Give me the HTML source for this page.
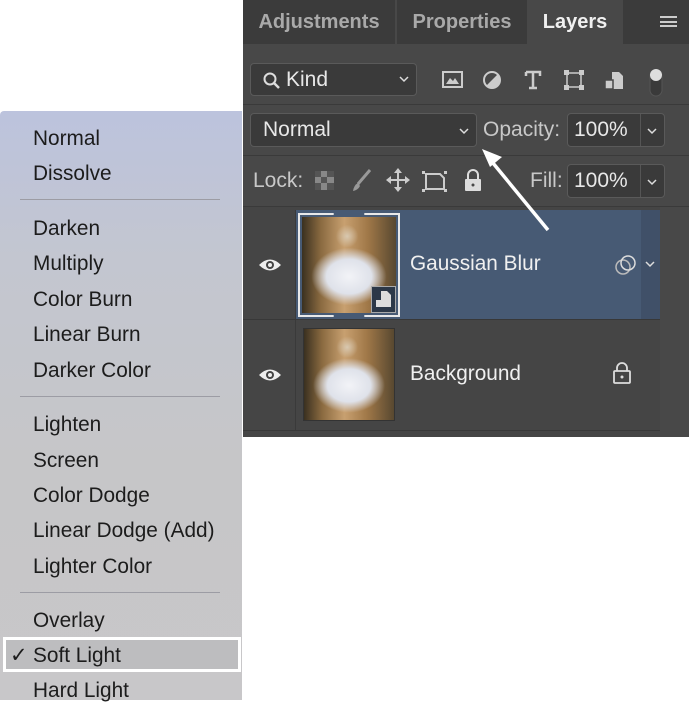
<!DOCTYPE html>
<html><head><style>
*{margin:0;padding:0;box-sizing:border-box}
body{width:689px;height:700px;background:#fff;position:relative;overflow:hidden;font-family:"Liberation Sans",sans-serif}
.a{position:absolute}
.panel{left:243px;top:0;width:446px;height:437px;background:#484848}
.tab{top:0;height:44px;background:#3b3b3b;color:#a9a9a9;font-size:20px;font-weight:bold;line-height:44px;text-align:center}
.box{background:#3a3a3a;border:1px solid #5a5a5a;border-radius:4px;color:#e8e8e8;font-size:21px}
.menu{left:0;top:111px;width:242px;height:589px;background:linear-gradient(#bcc3dd 0%,#c3c6d0 25%,#c6c6c8 60%,#c8c7c9 100%);border-top-left-radius:4px}
.mi{position:absolute;left:33px;font-size:20.8px;color:#1c1c1c;line-height:24px}
.sep{position:absolute;left:20px;width:200px;height:1px;background:#9c9ca4}
.thumb{background:
radial-gradient(ellipse 40% 30% at 50% 62%,#f2f3f7 0%,#dfe2ea 60%,rgba(220,220,230,0) 100%),
radial-gradient(ellipse 12% 12% at 48% 20%,#d8c8b0 0%,rgba(0,0,0,0) 100%),
linear-gradient(90deg,#3a3020 0%,#8a6a40 20%,#c8a070 45%,#a07848 70%,#584830 100%);}
</style></head><body>
<div class="a panel"></div>
<div class="a tab" style="left:243px;width:152px">Adjustments</div>
<div class="a tab" style="left:397px;width:130px">Properties</div>
<div class="a tab" style="left:529px;width:92px;background:#484848;color:#f0f0f0">Layers</div>
<div class="a tab" style="left:623px;width:66px"></div>
<div class="a" style="left:660px;top:16px;width:17px;height:11px;border-top:2px solid #ccc;border-bottom:2px solid #ccc"><div style="margin-top:2.5px;height:2px;background:#ccc"></div></div>
<div class="a" style="left:243px;top:104px;width:446px;height:1px;background:#3a3a3a"></div>
<div class="a" style="left:243px;top:155px;width:446px;height:1px;background:#3a3a3a"></div>
<div class="a" style="left:243px;top:206px;width:446px;height:1px;background:#3a3a3a"></div>
<!-- kind -->
<div class="a box" style="left:250px;top:63px;width:167px;height:33px;padding-left:35px;line-height:31px">Kind</div>
<svg class="a" style="left:262px;top:71px" width="20" height="20"><circle cx="8" cy="8" r="5.5" fill="none" stroke="#ddd" stroke-width="2"/><path d="M12 12l5 5" stroke="#ddd" stroke-width="2.5"/></svg>
<svg class="a" style="left:398px;top:74px" width="12" height="10"><path d="M2 3l4 4 4-4" fill="none" stroke="#ddd" stroke-width="1.5"/></svg>
<svg class="a" style="left:440px;top:68px" width="230" height="30">
<rect x="3" y="4" width="19" height="15" fill="none" stroke="#ccc" stroke-width="2"/><path d="M6 16l4-6 3 3 2-3 4 6z" fill="#ccc"/>
<circle cx="52" cy="12" r="8" fill="none" stroke="#ccc" stroke-width="2"/><path d="M46 18L58 6A8 8 0 0 1 46 18z" fill="#ccc"/>
<path d="M86 4h14v4M93 4v16M89 20h8M86 4v4" fill="none" stroke="#ccc" stroke-width="2.5"/>
<rect x="127" y="5" width="14" height="14" fill="none" stroke="#ccc" stroke-width="1.5"/><g fill="#ccc"><rect x="124" y="2" width="5" height="5"/><rect x="139" y="2" width="5" height="5"/><rect x="124" y="17" width="5" height="5"/><rect x="139" y="17" width="5" height="5"/></g>
<path d="M172 4h7l4 4v13h-11z" fill="#ccc"/><rect x="165" y="12" width="8" height="9" fill="#ccc" stroke="#484848" stroke-width="1.5"/>
<rect x="210" y="2" width="12" height="26" rx="6" fill="#3a3a3a" stroke="#555"/><circle cx="216" cy="7" r="6" fill="#ddd"/>
</svg>
<!-- normal -->
<div class="a box" style="left:250px;top:113px;width:227px;height:34px;padding-left:12px;line-height:32px">Normal</div>
<svg class="a" style="left:458px;top:126px" width="12" height="10"><path d="M2 3l4 4 4-4" fill="none" stroke="#ddd" stroke-width="1.5"/></svg>
<div class="a" style="left:483px;top:118px;color:#c8c8c8;font-size:21px">Opacity:</div>
<div class="a box" style="left:567px;top:113px;width:98px;height:34px;padding-left:6px;line-height:32px">100%</div>
<div class="a" style="left:640px;top:114px;width:1px;height:32px;background:#555"></div>
<svg class="a" style="left:646px;top:126px" width="12" height="10"><path d="M2 3l4 4 4-4" fill="none" stroke="#ddd" stroke-width="1.5"/></svg>
<!-- lock -->
<div class="a" style="left:253px;top:169px;color:#c8c8c8;font-size:21px">Lock:</div>
<svg class="a" style="left:314px;top:168px" width="180" height="26">
<rect x="1" y="3" width="19" height="19" fill="#888"/><g fill="#555"><rect x="1" y="3" width="6" height="6"/><rect x="13" y="3" width="7" height="6"/><rect x="7" y="9" width="6" height="6"/><rect x="1" y="15" width="6" height="7"/><rect x="13" y="15" width="7" height="7"/></g>
<path d="M56 2L44 16" stroke="#999" stroke-width="3"/><path d="M44 15q-4 2-5 8q5-1 7-5z" fill="#999"/>
<path d="M84 2v20M74 12h20" stroke="#ccc" stroke-width="2"/><path d="M84 0l-4 5h8zM84 24l-4-5h8zM72 12l5-4v8zM96 12l-5-4v8z" fill="#ccc"/>
<path d="M112 6h14l4 4v11h-18z" fill="none" stroke="#ccc" stroke-width="2"/><g fill="#ccc"><rect x="108" y="3" width="3" height="3"/><rect x="130" y="3" width="3" height="3"/><rect x="108" y="21" width="3" height="3"/><rect x="130" y="21" width="3" height="3"/></g>
<rect x="151" y="11" width="16" height="12" rx="1" fill="#ddd"/><path d="M154 11V7a5 5 0 0 1 10 0v4" fill="none" stroke="#ddd" stroke-width="2"/><circle cx="159" cy="17" r="1.5" fill="#484848"/>
</svg>
<div class="a" style="left:530px;top:169px;color:#c8c8c8;font-size:21px">Fill:</div>
<div class="a box" style="left:567px;top:164px;width:98px;height:34px;padding-left:6px;line-height:32px">100%</div>
<div class="a" style="left:640px;top:165px;width:1px;height:32px;background:#555"></div>
<svg class="a" style="left:646px;top:177px" width="12" height="10"><path d="M2 3l4 4 4-4" fill="none" stroke="#ddd" stroke-width="1.5"/></svg>
<!-- layers -->
<div class="a" style="left:243px;top:207px;width:446px;height:230px;background:#454545"></div>
<div class="a" style="left:295px;top:210px;width:1px;height:220px;background:#3a3a3a"></div>
<div class="a" style="left:296px;top:210px;width:364px;height:109px;background:#475a74"></div>
<div class="a" style="left:641px;top:210px;width:19px;height:109px;background:#405068"></div>
<div class="a" style="left:243px;top:319px;width:446px;height:1px;background:#383838"></div>
<div class="a" style="left:243px;top:430px;width:446px;height:1px;background:#383838"></div>
<div class="a" style="left:660px;top:207px;width:29px;height:230px;background:#484848"></div>
<svg class="a" style="left:258px;top:256px" width="24" height="140"><path d="M1 9q11-11 22 0q-11 11-22 0z" fill="#eee"/><circle cx="12" cy="9" r="4" fill="#454545"/><circle cx="12" cy="9" r="2" fill="#eee"/><path d="M1 119q11-11 22 0q-11 11-22 0z" fill="#eee"/><circle cx="12" cy="119" r="4" fill="#454545"/><circle cx="12" cy="119" r="2" fill="#eee"/></svg>
<div class="a thumb" style="left:302px;top:217px;width:94px;height:96px"></div>
<div class="a" style="left:298px;top:213px;width:102px;height:104px;border:2px solid #e8e8e8;clip-path:polygon(0 0,35% 0,35% 100%,0 100%,0 0,100% 0,100% 100%,65% 100%,65% 0)"></div>
<div class="a" style="left:371px;top:286px;width:25px;height:27px;background:#2c3848;border:1px solid #aaa"></div>
<svg class="a" style="left:374px;top:289px" width="20" height="20"><path d="M7 2h6l4 4v12h-8v-6h-2z" fill="#ddd"/><rect x="2" y="11" width="7" height="7" fill="#ddd"/></svg>
<div class="a thumb" style="left:303px;top:328px;width:92px;height:93px;border:1px solid #333"></div>
<div class="a" style="left:410px;top:252px;color:#f0f0f0;font-size:20.8px">Gaussian Blur</div>
<div class="a" style="left:410px;top:362px;color:#f0f0f0;font-size:20.8px">Background</div>
<svg class="a" style="left:614px;top:254px" width="24" height="22"><circle cx="9" cy="13" r="7" fill="none" stroke="#bbb" stroke-width="1.5"/><circle cx="14" cy="9" r="7" fill="none" stroke="#ddd" stroke-width="1.5"/></svg>
<svg class="a" style="left:644px;top:259px" width="12" height="10"><path d="M2 3l4 4 4-4" fill="none" stroke="#ddd" stroke-width="1.5"/></svg>
<svg class="a" style="left:612px;top:362px" width="20" height="22"><rect x="2" y="9" width="16" height="12" rx="1" fill="none" stroke="#ddd" stroke-width="1.8"/><path d="M5 9V6a5 5 0 0 1 10 0v3" fill="none" stroke="#ddd" stroke-width="1.8"/><circle cx="10" cy="15" r="1.5" fill="#ddd"/></svg>
<!-- arrow -->
<svg class="a" style="left:470px;top:140px" width="90" height="100"><path d="M78 90L18 17" stroke="#fff" stroke-width="3.5"/><path d="M12 9l20 8-12 10z" fill="#fff"/></svg>
<!-- menu -->
<div class="a menu">
<div class="mi" style="top:16px">Normal</div>
<div class="mi" style="top:51px">Dissolve</div>
<div class="sep" style="top:88px"></div>
<div class="mi" style="top:106px">Darken</div>
<div class="mi" style="top:141px">Multiply</div>
<div class="mi" style="top:177px">Color Burn</div>
<div class="mi" style="top:212px">Linear Burn</div>
<div class="mi" style="top:248px">Darker Color</div>
<div class="sep" style="top:285px"></div>
<div class="mi" style="top:302px">Lighten</div>
<div class="mi" style="top:338px">Screen</div>
<div class="mi" style="top:373px">Color Dodge</div>
<div class="mi" style="top:408px">Linear Dodge (Add)</div>
<div class="mi" style="top:444px">Lighter Color</div>
<div class="sep" style="top:481px"></div>
<div class="mi" style="top:498px">Overlay</div>
<div style="position:absolute;left:3px;top:526px;width:238px;height:35px;border:3px solid #fff;background:#bdbdbf"></div>
<div class="mi" style="top:533px;left:10px">✓</div>
<div class="mi" style="top:533px">Soft Light</div>
<div class="mi" style="top:568px">Hard Light</div>
</div>
</body></html>
